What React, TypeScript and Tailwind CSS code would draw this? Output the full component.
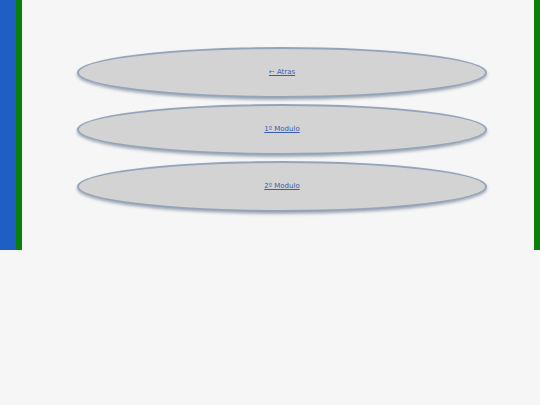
import React from 'react';

const links = ['← Atras', '1º Modulo', '2º Modulo'];

export default function App() {
  return (
    <div className="min-h-[405px] w-full bg-[#f6f6f6]" style={{ fontFamily: '"DejaVu Sans", Verdana, sans-serif' }}>
      <div className="flex h-[250px]">
        <div className="w-[16px] bg-[#1f5fc4]" />
        <div className="w-[6px] bg-[#0a7f0a]" />
        <div className="flex flex-1 flex-col gap-[6px] pt-[47px]">
          {links.map((label) => (
            <div
              key={label}
              className="ml-[55px] flex h-[51px] w-[410px] items-center justify-center rounded-[50%] border-2 border-[#95a5b9] bg-[#d3d3d3] shadow-[0_2px_3px_rgba(40,60,90,0.4)]"
            >
              <a href="#" className="text-[7px] text-[#3b5dae] underline">
                {label}
              </a>
            </div>
          ))}
        </div>
        <div className="w-[6px] bg-[#0a7f0a]" />
      </div>
    </div>
  );
}
